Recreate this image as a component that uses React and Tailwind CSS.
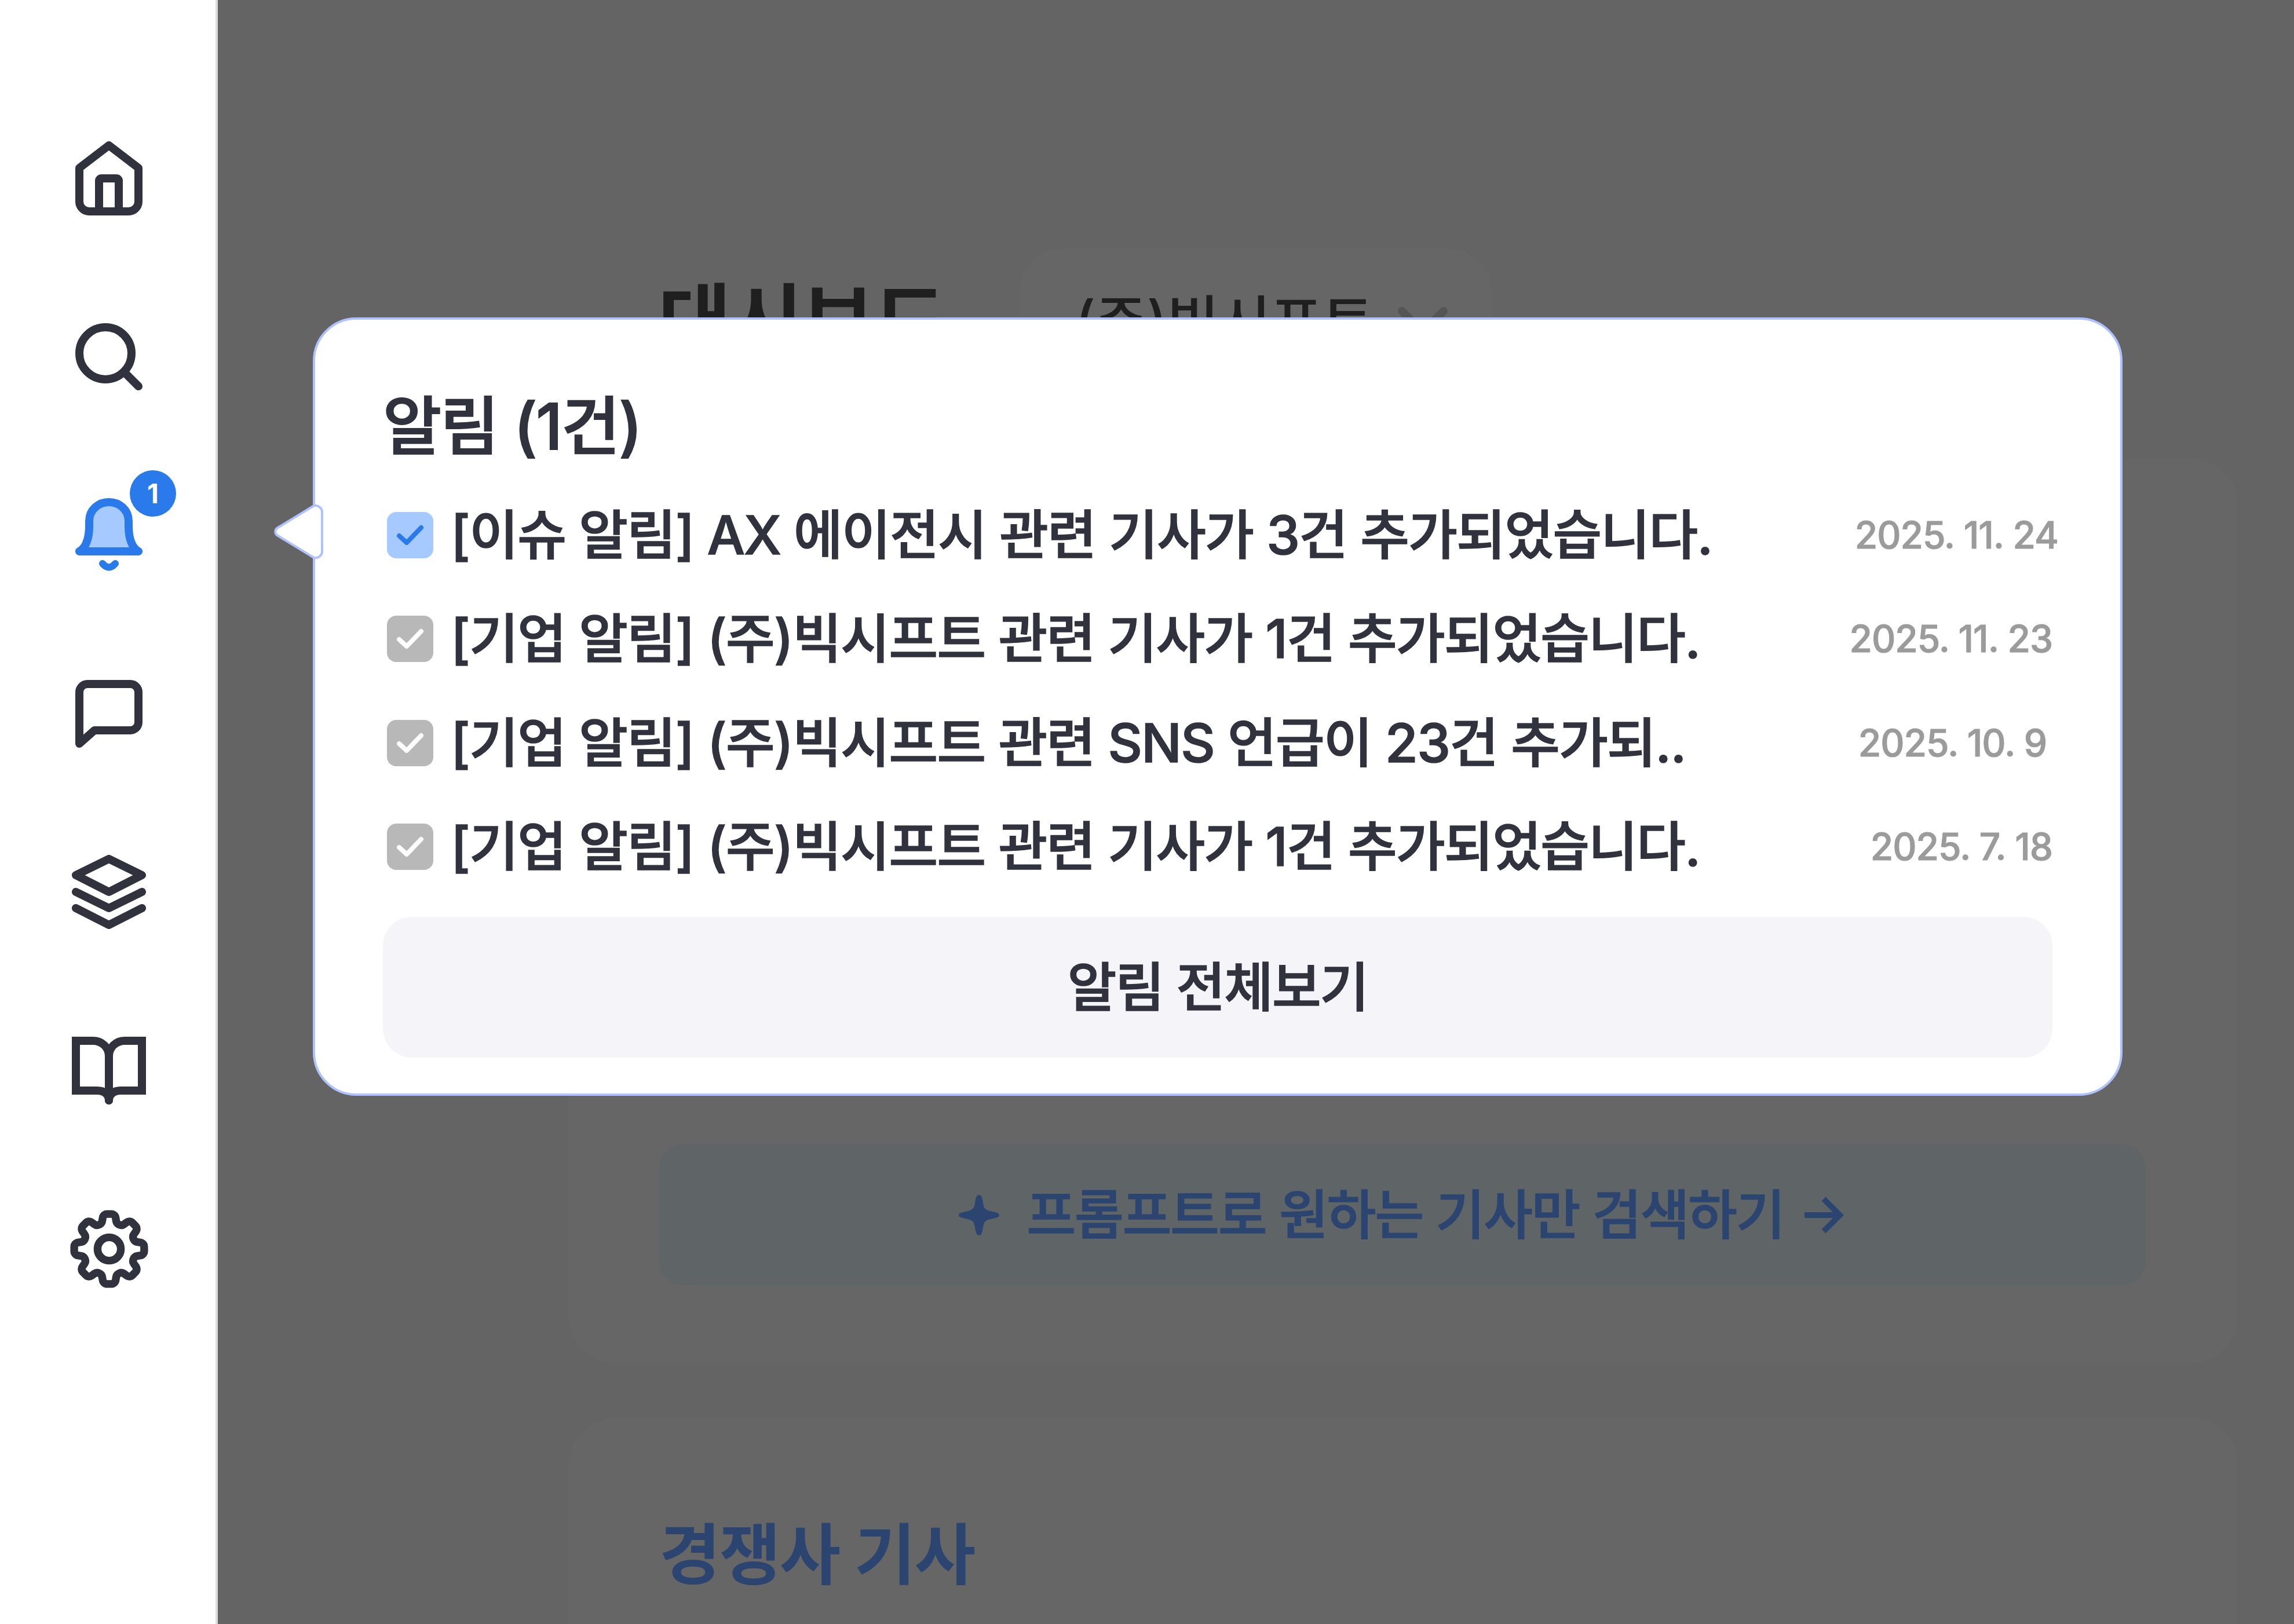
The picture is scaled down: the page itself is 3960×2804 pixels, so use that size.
import React from "react";
import { HiOutlineCog8Tooth } from "react-icons/hi2";
import { ChevronDown } from "lucide-react";

const ink = "#30323e";
const blue = "#2a7aeb";
const navy = "#2b4570";
const FONT = "font-['Inter','Noto_Sans_CJK_KR',sans-serif]";

const notices = [
  { text: "[이슈 알림] AX 에이전시 관련 기사가 3건 추가되었습니다.", date: "2025. 11. 24", active: true, dateClass: "-mr-[10px]" },
  { text: "[기업 알림] (주)빅시프트 관련 기사가 1건 추가되었습니다.", date: "2025. 11. 23", dateClass: "" },
  { text: "[기업 알림] (주)빅시프트 관련 SNS 언급이 23건 추가되..", date: "2025. 10. 9", dateClass: "mr-[10px]" },
  { text: "[기업 알림] (주)빅시프트 관련 기사가 1건 추가되었습니다.", date: "2025. 7. 18", dateClass: "" },
];

function HomeIcon() {
  return (
    <svg width="116" height="128" viewBox="0 0 116 128" fill="none" stroke={ink} strokeWidth="14" strokeLinejoin="round" strokeLinecap="round">
      <path d="M7 46 L58 7 L109 46 V104 a17 17 0 0 1 -17 17 H24 a17 17 0 0 1 -17 -17 Z" />
      <path d="M41 121 V68 a4 4 0 0 1 4 -4 h26 a4 4 0 0 1 4 4 V121" />
    </svg>
  );
}

function SearchIcon() {
  return (
    <svg width="116" height="116" viewBox="0 0 116 116" fill="none" stroke={ink} strokeWidth="14" strokeLinecap="round">
      <circle cx="52" cy="52" r="45" />
      <path d="M85 85 L109 109" />
    </svg>
  );
}

function BellIcon() {
  return (
    <svg width="116" height="128" viewBox="0 0 116 128" fill="none" stroke={blue} strokeWidth="14" strokeLinecap="round" strokeLinejoin="round">
      <path fill="#a6c9ff" d="M7 92 C18 86 24 70 24 48 V40 C24 20 40 7 58 7 C76 7 92 20 92 40 V48 C92 70 98 86 109 92 Z" />
      <path strokeWidth="12" d="M47 113 Q58 126 69 113" />
    </svg>
  );
}

function ChatIcon() {
  return (
    <svg width="116" height="117" viewBox="0 0 116 117" fill="none" stroke={ink} strokeWidth="14" strokeLinejoin="round" strokeLinecap="round">
      <path d="M7 21 a14 14 0 0 1 14 -14 H95 a14 14 0 0 1 14 14 V73 a14 14 0 0 1 -14 14 H33 L7 110 Z" />
    </svg>
  );
}

function LayersIcon() {
  return (
    <svg width="128" height="128" viewBox="0 0 128 128" fill="none" stroke={ink} strokeWidth="14" strokeLinecap="round" strokeLinejoin="round">
      <path d="M64 7 L121 35 L64 64 L7 35 Z" />
      <path d="M7 64 L64 92 L121 64" />
      <path d="M7 92 L64 121 L121 92" />
    </svg>
  );
}

function BookIcon() {
  return (
    <svg width="128" height="117" viewBox="0 0 128 117" fill="none" stroke={ink} strokeWidth="14" strokeLinecap="round" strokeLinejoin="miter">
      <path d="M64 110 V34 C64 18 52 7 36 7 H7 V93 H44 C56 93 64 100 64 110" />
      <path d="M64 110 V34 C64 18 76 7 92 7 H121 V93 H84 C72 93 64 100 64 110" />
    </svg>
  );
}

function SparkleIcon() {
  return (
    <svg className="mr-[47px]" width="70" height="70" viewBox="0 0 70 70" fill={navy} stroke="none">
      <path d="M35 0 C38 0 40 3 41 8 C42 15 43 22 46 24 C48 27 55 28 63 30 C68 31 70 33 70 35 C70 37 68 39 63 40 C55 42 48 43 46 46 C43 48 42 55 41 62 C40 67 38 70 35 70 C32 70 30 67 29 62 C28 55 27 48 24 46 C22 43 15 42 7 40 C2 39 0 37 0 35 C0 33 2 31 7 30 C15 28 22 27 24 24 C27 22 28 15 29 8 C30 3 32 0 35 0 Z" />
    </svg>
  );
}

function ArrowIcon() {
  return (
    <svg className="ml-[35px]" width="68" height="64" viewBox="0 0 68 64" fill="none" stroke={navy} strokeWidth="10" strokeLinejoin="miter">
      <path d="M0 32 H60" />
      <path d="M33 4 L61 32 L33 60" />
    </svg>
  );
}

function Nav({ children }) {
  return <div className="h-[308px] pl-[4px] flex items-center justify-center">{children}</div>;
}

function Sidebar() {
  return (
    <aside className="w-[376px] shrink-0 h-full bg-white border-r-4 border-[#dcdcdc] pt-[154px] flex flex-col">
      <Nav><HomeIcon /></Nav>
      <Nav><SearchIcon /></Nav>
      <Nav>
        <div className="relative">
          <BellIcon />
          <span className="absolute -top-[48px] left-[94px] w-[80px] h-[80px] rounded-full bg-[#2a7aeb] text-white text-[46px] font-bold flex items-center justify-center">1</span>
        </div>
      </Nav>
      <Nav><ChatIcon /></Nav>
      <Nav><LayersIcon /></Nav>
      <Nav><BookIcon /></Nav>
      <Nav><HiOutlineCog8Tooth size={161} color={ink} strokeWidth={2} /></Nav>
    </aside>
  );
}

function NoticeRow({ item }) {
  return (
    <li className="h-[179.5px] flex items-center">
      <span className={"w-[80px] h-[80px] ml-[7px] rounded-[16px] flex items-center justify-center " + (item.active ? "bg-[#a6c9ff]" : "bg-[#b8b8b8]")}>
        <svg width="48" height="36" viewBox="0 0 48 36" fill="none" stroke={item.active ? blue : "#ffffff"} strokeWidth="8" strokeLinecap="round" strokeLinejoin="round">
          <path d="M5 19 L18 31 L43 5" />
        </svg>
      </span>
      <span className="ml-[30px] text-[92px] font-medium tracking-[-1.6px] whitespace-nowrap [-webkit-text-stroke:1.6px_#30323e]">{item.text}</span>
      <span className={"ml-auto text-[64px] font-medium text-[#9b9b9b] tracking-[-1px] whitespace-nowrap [-webkit-text-stroke:1px_#9b9b9b] " + item.dateClass}>{item.date}</span>
    </li>
  );
}

function NoticePopup() {
  return (
    <div className="absolute left-[540px] top-[548px] w-[3124px] h-[1344px] bg-white border-[4px] border-[#adc2ff] rounded-[75px] pl-[117px] pr-[117px] pt-[114px]" style={{ color: ink }}>
      <svg className="absolute left-[-72px] top-[318px]" width="88" height="96" viewBox="0 0 88 96" fill="#ffffff" stroke="#adc2ff" strokeWidth="4" strokeLinejoin="round">
        <path d="M70 3 a12 12 0 0 1 14 10 V84 a12 12 0 0 1 -14 9 L6 54 a8 8 0 0 1 0 -12 Z" />
      </svg>
      <h2 className="text-[110px] leading-[140px] font-medium tracking-[-2px] mb-[28px] [-webkit-text-stroke:2px_#30323e]">알림 (1건)</h2>
      <ul>
        {notices.map((item, i) => <NoticeRow key={i} item={item} />)}
      </ul>
      <button className="mt-[31px] w-full h-[243px] rounded-[50px] bg-[#f4f4f9] text-[92px] font-medium tracking-[-2px] flex items-center justify-center [-webkit-text-stroke:1.6px_#30323e]">
        알림 전체보기
      </button>
    </div>
  );
}

export default function App() {
  return (
    <div className={"relative flex w-[3960px] h-[2804px] overflow-hidden bg-[#646464] " + FONT}>
      <Sidebar />
      <div className="flex-1 h-full pt-[429px] pr-[97px] pl-[606px]">
        <div className="flex h-[363px]">
          <h1 className="ml-[154px] mt-[50px] text-[137px] leading-[150px] font-bold text-[#1f1f1f] tracking-[-2px]">대시보드</h1>
          <div className="ml-[128px] w-[815px] h-[252px] rounded-[75px] bg-[#666666] flex items-center pl-[95px] gap-[13px] text-[#1f1f1f] text-[98px] font-medium tracking-[-1px]">
            (주)빅시프트
            <ChevronDown size={144} color="#555555" strokeWidth={2.3} />
          </div>
        </div>
        <section className="h-[1562px] rounded-[80px] bg-[#666666] pl-[156px] pr-[159px] pt-[1184px]">
          <div className="h-[243px] pr-[4px] rounded-[40px] bg-[#5f6467] flex items-center justify-center text-[92px] font-medium tracking-[-2px] [-webkit-text-stroke:1.6px_#2b4570]" style={{ color: navy }}>
            <SparkleIcon />
            프롬프트로 원하는 기사만 검색하기
            <ArrowIcon />
          </div>
        </section>
        <section className="mt-[94px] h-[600px] rounded-[80px] bg-[#666666] px-[156px] pt-[162px]">
          <h2 className="text-[115px] leading-[150px] font-bold text-[#2b4570] tracking-[-2px]">경쟁사 기사</h2>
        </section>
      </div>
      <NoticePopup />
    </div>
  );
}
